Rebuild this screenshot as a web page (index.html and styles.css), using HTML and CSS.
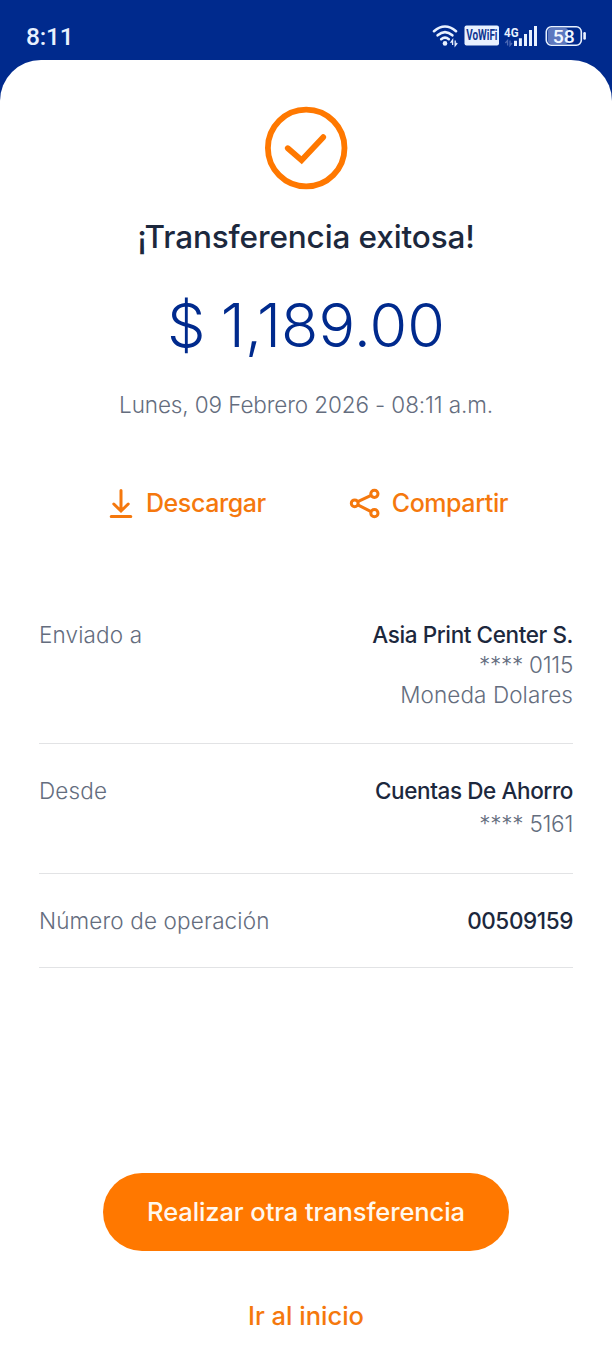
FILE: index.html
```
<!DOCTYPE html>
<html lang="es">
<head>
<meta charset="utf-8">
<title>Transferencia exitosa</title>
<link rel="stylesheet" href="styles.css">
</head>
<body>
<header class="status">
  <span class="clock">8:11</span>
  <svg class="status-icons" width="156" height="26" viewBox="432 23 156 26" aria-hidden="true">
    <g fill="none" stroke="#e8f1ff" stroke-width="2.6" stroke-linecap="round">
      <path d="M434 31.2Q445 21.8 456 31.2"/>
      <path d="M437.6 35.3Q445 29 452.4 35.3"/>
      <path d="M441.2 39.2Q445 36.2 448.8 39.2"/>
    </g>
    <circle cx="445" cy="43.4" r="2.3" fill="#e8f1ff"/>
    <path d="M452.6 45V40L450.6 42.8M455.2 40.6V45.6L457.2 43" fill="none" stroke="#e8f1ff" stroke-width="1.3"/>
    <rect x="464.5" y="25.5" width="34.5" height="20" rx="2" fill="#e8f1ff"/>
    <text class="badge" transform="translate(466.2 40.3) scale(.71 1)">VoWiFi</text>
    <text class="net" transform="translate(504 36.6) scale(.86 1)">4G</text>
    <path d="M507.6 45.4V40.4L505.4 43M510 40.4V45.4L512 43" fill="none" stroke="#4d69b4" stroke-width="1.3"/>
    <path d="M515.5 40.8V46M520.4 38.3V46M525.5 34V46M530.5 30V46M535.5 26V46" stroke="#e8f1ff" stroke-width="3"/>
    <rect x="548" y="28" width="20" height="16" rx="3" fill="#5d78bf"/>
    <rect x="546.3" y="26.8" width="35" height="18.4" rx="5" fill="none" stroke="#e8f1ff" stroke-width="1.6"/>
    <path d="M584.6 33.3V38.5" stroke="#e8f1ff" stroke-width="2.6" stroke-linecap="round"/>
    <text class="charge" transform="translate(552.8 42.6) scale(1.05 1)">58</text>
  </svg>
</header>
<main class="sheet">
  <svg class="check" width="84" height="84" viewBox="0 0 84 84" fill="none" stroke="#ff7800" stroke-width="5.8" aria-hidden="true">
    <circle cx="42.2" cy="42" r="38.3"/>
    <path d="M23.8 42.2L37.6 54.2L59.2 31.2" stroke-linecap="round"/>
  </svg>
  <h1 class="title">¡Transferencia exitosa!</h1>
  <p class="amount">$ 1,189.00</p>
  <p class="date">Lunes, 09 Febrero 2026 - 08:11 a.m.</p>
  <div class="actions">
    <a class="action">
      <svg width="24" height="32" viewBox="0 0 24 32" fill="none" stroke="#f5780d" stroke-width="3" stroke-linecap="round" aria-hidden="true">
        <path d="M12 3.5V23M4.8 17L12 24L19.2 17M2.2 29.5H21.8"/>
      </svg>
      <span>Descargar</span>
    </a>
    <a class="action action-share">
      <svg width="32" height="32" viewBox="0 0 32 32" fill="none" stroke="#f5780d" stroke-width="3" aria-hidden="true">
        <circle cx="5.7" cy="16.3" r="3.4"/><circle cx="25.4" cy="6.8" r="3.6"/><circle cx="25.4" cy="26.2" r="3.6"/>
        <path d="M8.8 14.7L22.1 8.3M8.8 17.9L22.1 24.6"/>
      </svg>
      <span>Compartir</span>
    </a>
  </div>
  <section class="details">
    <div class="row row-to">
      <span class="label">Enviado a</span>
      <div class="values">
        <span class="name">Asia Print Center S.</span>
        <span class="account">**** 0115</span>
        <span class="currency">Moneda Dolares</span>
      </div>
    </div>
    <div class="row row-from">
      <span class="label">Desde</span>
      <div class="values">
        <span class="name">Cuentas De Ahorro</span>
        <span class="account">**** 5161</span>
      </div>
    </div>
    <div class="row row-op">
      <span class="label">Número de operación</span>
      <span class="name">00509159</span>
    </div>
  </section>
  <button class="primary">Realizar otra transferencia</button>
  <a class="home">Ir al inicio</a>
</main>
</body>
</html>
```
FILE: styles.css
```
* { box-sizing: border-box; }
body {
  margin: 0;
  height: 1350px;
  background: #002a8d;
  font-family: Inter, sans-serif;
  color: #1c283d;
  white-space: nowrap;
  overflow: hidden;
}
.status {
  height: 60px;
  padding: 12px 24px 0 26px;
  display: flex;
  align-items: center;
  justify-content: space-between;
}
.clock {
  margin-top: 1px;
  font: 500 24.5px/30px Roboto, sans-serif;
  letter-spacing: -0.2px;
  color: #e8f1ff;
}
.badge, .net, .charge { font-family: Roboto, sans-serif; font-weight: 700; }
.badge { font-size: 14px; fill: #10368f; }
.net { font-size: 13.5px; fill: #e8f1ff; }
.charge { font-size: 18.5px; font-weight: 500; fill: #f2f7ff; }
.sheet {
  height: 1290px;
  background: #fff;
  border-radius: 41px 41px 0 0;
  padding: 46px 39px 0;
  display: flex;
  flex-direction: column;
  align-items: center;
}
.check { flex: none; }
.title {
  margin: 27px 0 0;
  font-size: 31.5px;
  line-height: 40px;
  font-weight: 500;
  letter-spacing: -0.12px;
}
.amount {
  margin: 28px 0 0;
  font-size: 61px;
  line-height: 80px;
  font-weight: 340;
  letter-spacing: 0.1px;
  word-spacing: -2px;
  color: #002a8d;
}
.date {
  margin: 25px 0 0;
  font-size: 22.5px;
  line-height: 30px;
  font-weight: 320;
  letter-spacing: -0.12px;
  color: #646d7e;
}
.actions {
  margin-top: 67px;
  padding-left: 5px;
  display: flex;
  gap: 83px;
}
.action {
  display: flex;
  gap: 13px;
  font-size: 25px;
  line-height: 33px;
  font-weight: 500;
  letter-spacing: -0.43px;
  color: #f5780d;
}
.action-share { gap: 11px; }
.details {
  align-self: stretch;
  margin-top: 100px;
  font-size: 22.5px;
  line-height: 30px;
}
.row {
  display: flex;
  justify-content: space-between;
  border-bottom: 1px solid #e2e3e5;
}
.row-to { height: 124px; }
.row-from { height: 130px; padding-top: 32px; }
.row-op { height: 94px; padding-top: 32px; }
.values {
  display: flex;
  flex-direction: column;
  align-items: flex-end;
}
.row-from .account { line-height: 36px; }
.label, .account, .currency {
  font-weight: 320;
  color: #646d7e;
}
.label { letter-spacing: 0.13px; }
.currency { letter-spacing: 0.08px; }
.account { letter-spacing: -0.25px; }
.name { font-weight: 500; letter-spacing: -0.4px; }
.primary {
  margin-top: 205px;
  width: 406px;
  height: 78px;
  flex: none;
  border: 0;
  border-radius: 39px;
  background: #ff7800;
  color: #fff8ef;
  font: 500 25.5px/32px Inter, sans-serif;
  letter-spacing: -0.1px;
}
.home {
  margin-top: 49px;
  font-size: 25.5px;
  line-height: 32px;
  font-weight: 500;
  color: #f5780d;
}
```
